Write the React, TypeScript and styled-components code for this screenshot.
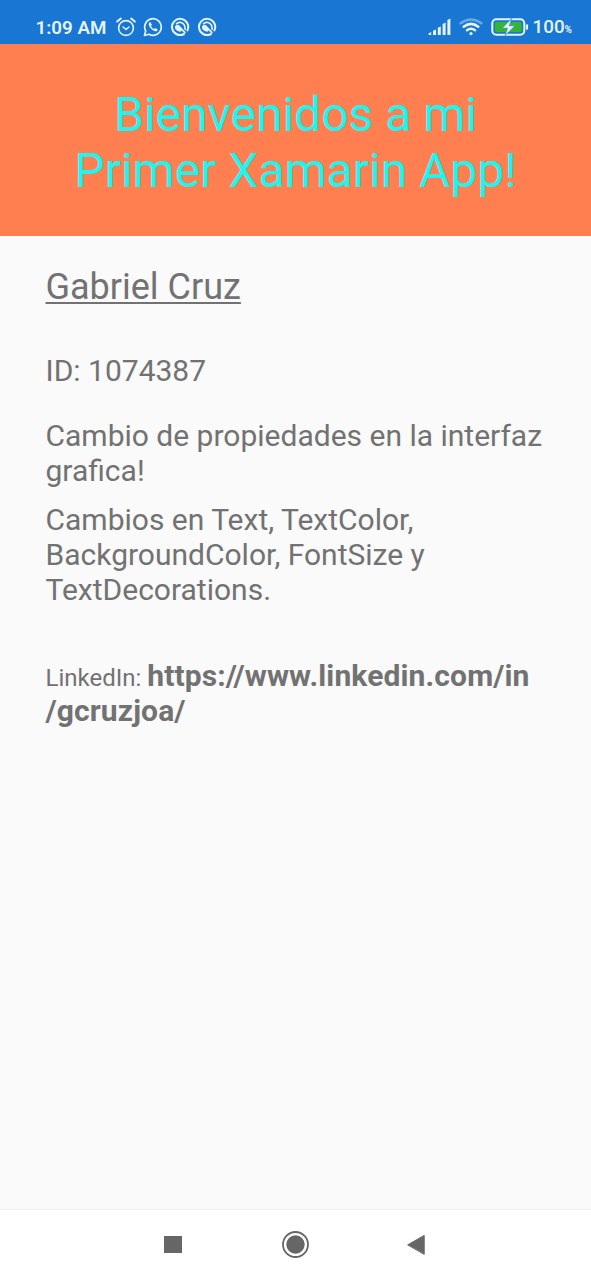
import React from "react";
import styled, { createGlobalStyle } from "styled-components";

const Global = createGlobalStyle`
  * { box-sizing: border-box; }
  body { margin: 0; font-family: Roboto, sans-serif; }
`;
const Screen = styled.div`
  height: 1280px;
  display: flex;
  flex-direction: column;
  background: #fafafa;
  color: #727272;
`;
const StatusBar = styled.header`
  height: 44px;
  background: #1976d2;
  color: #e3f4ff;
  display: flex;
  justify-content: space-between;
  padding: 10px 19px 0 35.5px;
`;
const Group = styled.div<{ $gap: number }>`
  display: flex;
  align-items: center;
  gap: ${(p) => p.$gap}px;
  height: 34px;
`;
const Icon = styled.svg`
  display: block;
  flex: none;
  fill: none;
  stroke: currentColor;
  stroke-linecap: round;
  stroke-linejoin: round;
`;
const Time = styled.span`
  width: 73px;
  padding-top: 2px;
  font-size: 18.8px;
  font-weight: 600;
  line-height: 34px;
  white-space: nowrap;
`;
const Battery = styled.span`
  padding-top: 2px;
  font-size: 18.8px;
  font-weight: 500;
  line-height: 34px;
  margin-left: -4px;
  small { font-size: 10px; font-weight: 700; }
`;
const Banner = styled.section`
  height: 192px;
  background: #ff7f50;
  padding: 43px 0 0;
  text-align: center;
  color: #1ef5f0;
`;
const Title = styled.h1`
  margin: 0;
  font-weight: 400;
  font-size: 48px;
  line-height: 56px;
`;
const Main = styled.main`
  flex: 1;
  padding: 30px 45.5px 0;
`;
const Line = styled.p<{ $size?: number; $lh?: number; $mt?: number }>`
  margin: ${(p) => p.$mt ?? 0}px 0 0;
  font-size: ${(p) => p.$size ?? 30}px;
  line-height: ${(p) => p.$lh ?? 35}px;
  white-space: nowrap;
`;
const Name = styled.span`
  text-decoration: underline;
  text-decoration-thickness: 2px;
  text-underline-offset: 3px;
`;
const Label = styled.span`
  font-size: 24px;
  line-height: 1;
`;
const Url = styled.b`
  font-weight: 700;
  letter-spacing: 0.12px;
`;
const NavBar = styled.nav`
  height: 71px;
  background: #fff;
  border-top: 1px solid #f0f0f0;
  display: flex;
  justify-content: space-between;
  align-items: center;
  padding: 0 165px 0 163px;
  color: #666;
`;

const Alarm = () => (
  <Icon width="20" height="20" viewBox="0 0 20 20" strokeWidth="1.6">
    <circle cx="10" cy="11" r="7.4" />
    <path d="M1.2 4.6 4.8 1.6M18.8 4.6 15.2 1.6" strokeWidth="2" />
    <path d="M7 10l3 2.5 3-2.5" />
  </Icon>
);
const WhatsApp = () => (
  <Icon width="20" height="20" viewBox="0 0 20 20" strokeWidth="1.7">
    <path d="M1.5 18.5 2.7 14A8.3 8.3 0 1 1 6 17.3Z" />
    <path
      d="M7.1 5c-1.2.5-1.6 1.6-1.3 2.8.8 3.2 3.2 5.6 6.4 6.4 1.3.3 2.3-.5 2.6-1.8l-2.6-1.5-1.2 1.1c-1.4-.6-2.4-1.6-3-3l1-1.2Z"
      fill="currentColor"
      stroke="none"
    />
  </Icon>
);
const Swirl = () => (
  <Icon width="20" height="20" viewBox="0 0 20 20" strokeWidth="2">
    <path d="M14 17A8.1 8.1 0 1 1 17.4 13.4" />
    <path d="M6.4 6.8A5 5 0 0 1 14.6 8.6L15.2 12.4" strokeWidth="1.6" />
    <path
      d="M4.8 10C6 7.4 8.2 7.2 9.6 8.8L16 15.4L14.6 16.6L11.6 13.4L10.4 14.8C7.4 14.6 5 12.8 4.8 10Z"
      fill="currentColor"
      stroke="none"
    />
  </Icon>
);
const Signal = () => (
  <Icon width="23" height="18" viewBox="0 0 23 18">
    <path
      d="M.3 15.4 3.2 14v3H.9ZM5 12.8l3-1.2V17H5ZM9.8 9.8l3-1.4V17h-3ZM14.6 6l3-1.6V17h-3ZM19.4 2l3-1.6V17h-3Z"
      fill="currentColor"
      stroke="none"
    />
  </Icon>
);
const Wifi = () => (
  <Icon width="24" height="18" viewBox="0 0 24 18" strokeWidth="2.5">
    <path d="M1.6 5.3Q12-2.4 22.4 5.3" opacity=".4" />
    <path d="M4.7 8.8Q12 3 19.3 8.8M8 12.3Q12 9.2 16 12.3" />
    <circle cx="12" cy="15.6" r="1.6" fill="currentColor" stroke="none" />
  </Icon>
);
const Charging = () => (
  <Icon width="38" height="18" viewBox="0 0 38 18" strokeWidth="2.1">
    <rect x="1.3" y="1.2" width="32" height="15.6" rx="4" />
    <rect x="4" y="4" width="26.6" height="10" rx="1.5" fill="#35b535" stroke="none" />
    <path d="M36 7.2v3.6" />
    <path d="M20.5.6 11.2 10.2h5.3L14 17.6 24 7.8h-5.4Z" fill="currentColor" stroke="#2b88b4" strokeWidth=".7" />
  </Icon>
);

export default function App() {
  return (
    <Screen>
      <Global />
      <StatusBar>
        <Group $gap={7.2}>
          <Time>1:09 AM</Time>
          <Alarm />
          <WhatsApp />
          <Swirl />
          <Swirl />
        </Group>
        <Group $gap={8}>
          <Signal />
          <Wifi />
          <Charging />
          <Battery>100<small>%</small></Battery>
        </Group>
      </StatusBar>
      <Banner>
        <Title>Bienvenidos a mi<br />Primer Xamarin App!</Title>
      </Banner>
      <Main>
        <Line $size={36} $lh={42}><Name>Gabriel Cruz</Name></Line>
        <Line $mt={45}>ID: 1074387</Line>
        <Line $mt={30}>Cambio de propiedades en la interfaz<br />grafica!</Line>
        <Line $mt={14}>Cambios en Text, TextColor,<br />BackgroundColor, FontSize y<br />TextDecorations.</Line>
        <Line $mt={51}><Label>LinkedIn: </Label><Url>https://www.linkedin.com/in<br />/gcruzjoa/</Url></Line>
      </Main>
      <NavBar>
        <Icon width="20" height="28" viewBox="0 0 20 28">
          <rect x="1" y="5" width="18" height="17" fill="currentColor" stroke="none" />
        </Icon>
        <Icon width="28" height="28" viewBox="0 0 28 28" strokeWidth="1.8">
          <circle cx="14.5" cy="13.5" r="12.5" />
          <circle cx="14.5" cy="13.5" r="9.2" fill="currentColor" stroke="none" />
        </Icon>
        <Icon width="20" height="28" viewBox="0 0 20 28" strokeWidth="1">
          <path d="M2 13.7 18.2 4.4v18.6Z" fill="currentColor" />
        </Icon>
      </NavBar>
    </Screen>
  );
}
